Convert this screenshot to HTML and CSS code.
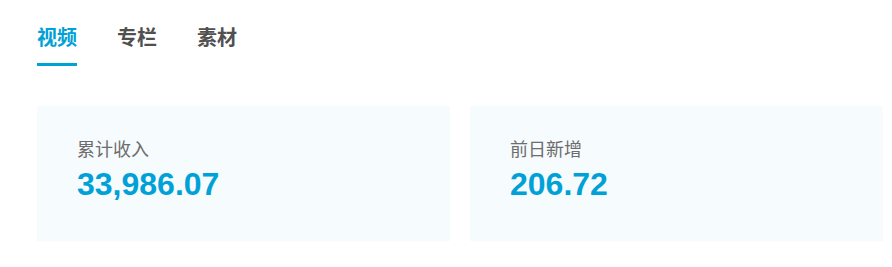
FILE: index.html
```html
<!DOCTYPE html>
<html lang="zh-CN">
<head>
<meta charset="utf-8">
<title>收益</title>
<link rel="stylesheet" href="styles.css">
</head>
<body>
<div class="page">
  <nav class="tabs">
    <a class="tab active">视频</a>
    <a class="tab">专栏</a>
    <a class="tab">素材</a>
  </nav>
  <div class="cards">
    <div class="card">
      <div class="label">累计收入</div>
      <div class="value">33,986.07</div>
    </div>
    <div class="card">
      <div class="label">前日新增</div>
      <div class="value">206.72</div>
    </div>
  </div>
</div>
</body>
</html>
```
FILE: styles.css
```css
html, body {
  margin: 0;
  padding: 0;
  background: #fff;
}
.page {
  padding: 23px 9px 0 37px;
  font-family: "Noto Sans CJK SC", "Noto Sans", sans-serif;
}
.tabs {
  display: flex;
  gap: 40px;
}
.tab {
  display: block;
  font-size: 20px;
  line-height: 28px;
  font-weight: bold;
  color: #505050;
  padding-bottom: 12px;
  border-bottom: 3px solid transparent;
}
.tab.active {
  color: #00a1d6;
  border-bottom-color: #00a1d6;
}
.cards {
  display: flex;
  gap: 20px;
  margin-top: 40px;
}
.card {
  flex: 1;
  height: 135px;
  box-sizing: border-box;
  padding: 30px 40px 0;
  background: #f6fbfe;
}
.label {
  font-size: 18px;
  line-height: 24px;
  color: #6d6d6d;
}
.value {
  margin-top: 6px;
  font-family: "Liberation Sans", Arial, sans-serif;
  font-weight: bold;
  font-size: 32px;
  line-height: 36px;
  color: #00a1d6;
}
```
